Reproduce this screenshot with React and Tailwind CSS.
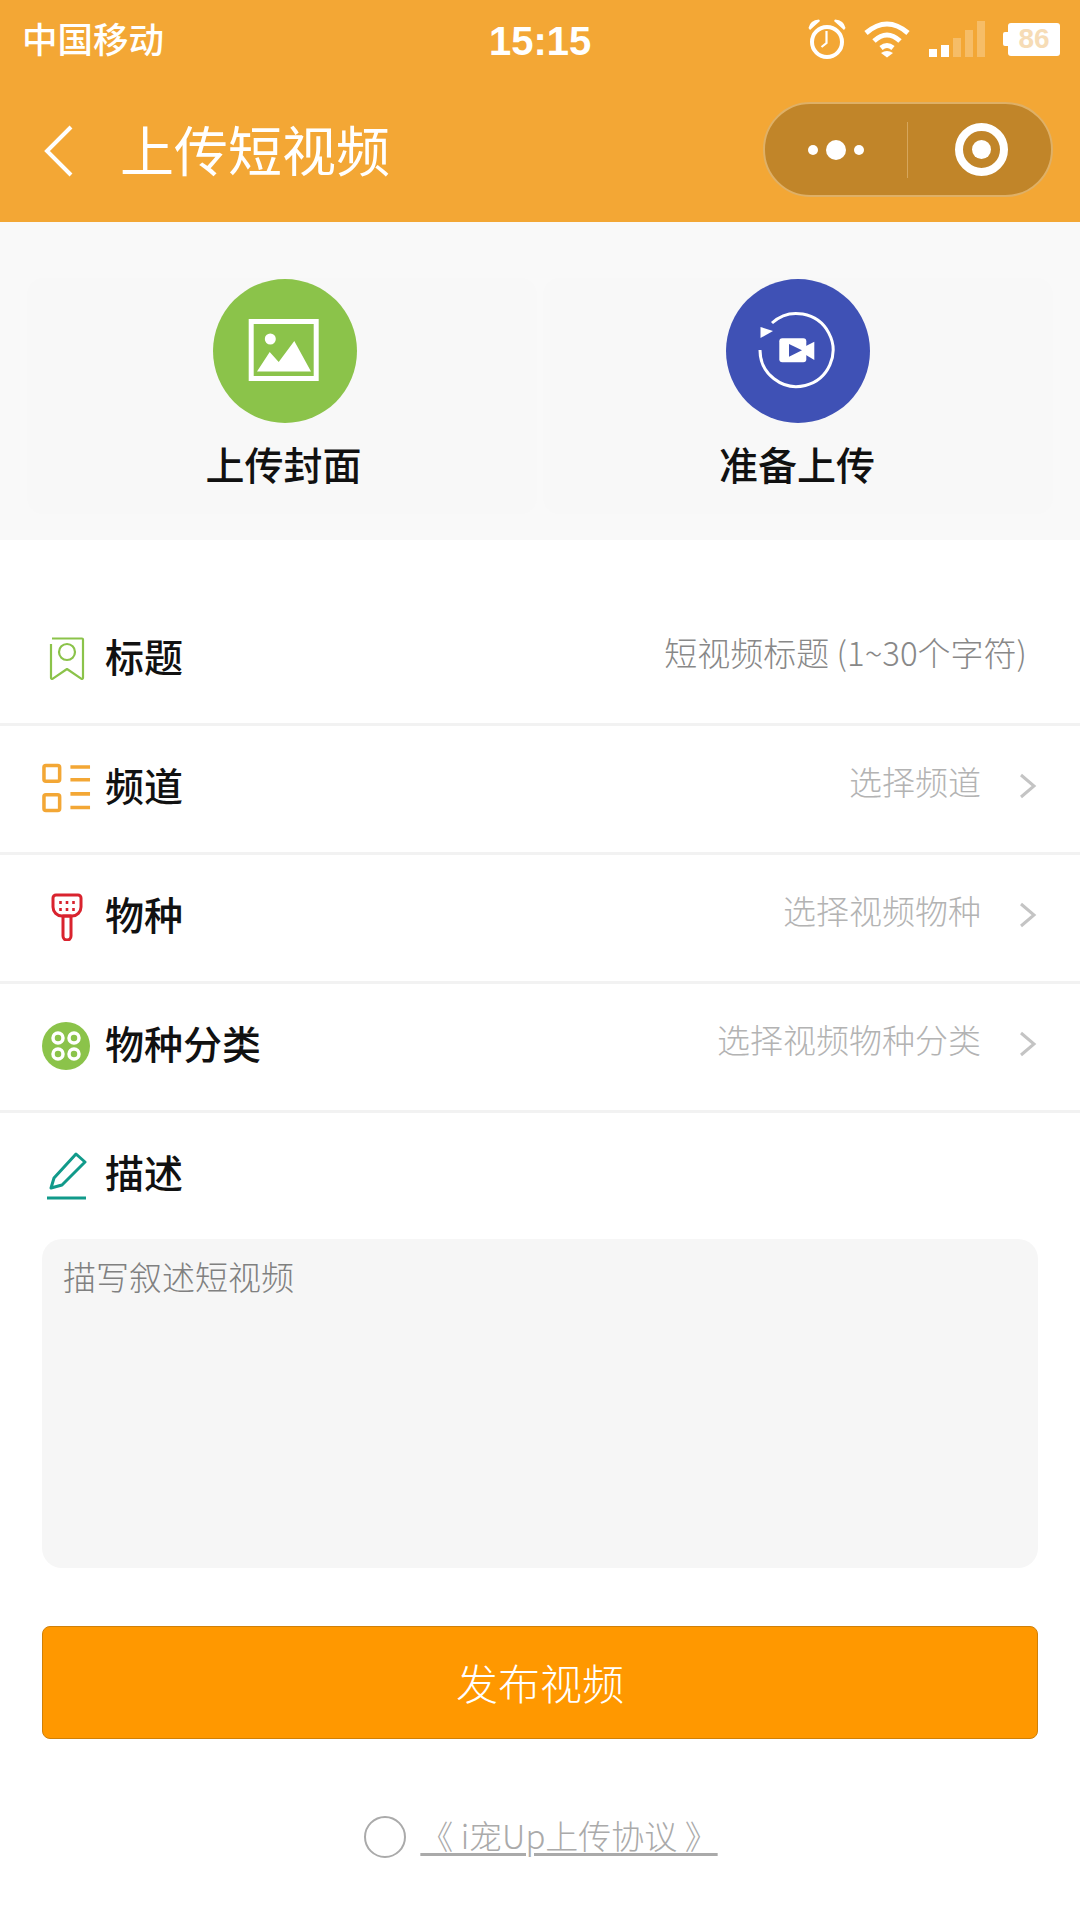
const cjk = "font-['Noto_Sans_CJK_SC','Liberation_Sans',sans-serif]";

function Alarm() {
  return (
    <svg width="40" height="40" viewBox="0 0 40 40" fill="none" stroke="#fff">
      <circle cx="19" cy="23" r="15" strokeWidth="4" />
      <path d="M18.5 12v12l-5 4" strokeWidth="2.2" />
      <path d="M0.5 9 Q2 1 11 0.5 L12 2 L2 11 Z M37.5 9 Q36 1 27 0.5 L26 2 L36 11 Z" fill="#fff" stroke="none" />
    </svg>
  );
}
function Wifi() {
  return (
    <svg width="46" height="38" viewBox="0 0 46 38" fill="none" stroke="#fff" strokeWidth="5">
      <path d="M2 13 Q23 -5 44 13" />
      <path d="M10 21 Q23 9 36 21" />
      <path d="M17 28 Q23 23 29 28" />
      <path d="M23 37.5 L17 33 Q23 29 29 33 Z" fill="#fff" stroke="none" />
    </svg>
  );
}
function Signal() {
  return (
    <svg width="58" height="36" viewBox="0 0 58 36" fill="#fff">
      <rect x="0" y="28" width="8" height="8" />
      <rect x="12" y="24" width="8" height="12" />
      <rect x="24" y="17" width="8" height="19" opacity="0.25" />
      <rect x="36" y="9" width="8" height="27" opacity="0.25" />
      <rect x="48" y="0" width="8" height="36" opacity="0.25" />
    </svg>
  );
}
function Chevron() {
  return (
    <svg width="18" height="26" viewBox="0 0 18 26" fill="none" stroke="#c4c4c4" strokeWidth="3">
      <path d="M2 2l13 11L2 24" />
    </svg>
  );
}
function BookmarkIcon() {
  return (
    <svg width="36" height="44" viewBox="0 0 36 44" fill="none" stroke="#8bc34a" strokeWidth="2.2" strokeLinejoin="round">
      <path d="M3 1.5h30a1 1 0 0 1 1 1V41a1 1 0 0 1-1.5 .8L18 32 3.5 41.8A1 1 0 0 1 2 41V7" />
      <circle cx="18" cy="15" r="8" />
    </svg>
  );
}
function ListIcon() {
  return (
    <svg width="50" height="50" viewBox="0 0 50 50" fill="none" stroke="#f3a735" strokeWidth="3.6">
      <rect x="2" y="2" width="16" height="16" rx="2" />
      <rect x="2" y="32" width="16" height="16" rx="2" />
      <path d="M29 3.5h20M29 16.5h20M29 31h20M29 45h20" />
    </svg>
  );
}
function SpatulaIcon() {
  return (
    <svg width="32" height="48" viewBox="0 0 32 48" fill="none" stroke="#d9232e" strokeWidth="3" strokeLinejoin="round">
      <path d="M5 2h22a3 3 0 0 1 3 3v9a9 9 0 0 1-9 9H11a9 9 0 0 1-9-9V5a3 3 0 0 1 3-3z" />
      <path d="M12 23h8v20a4 4 0 0 1-8 0z" />
      <path d="M9.500 8v3M16 8v3M22.500 8v3M9.500 15v3M16 15v3M22.500 15v3" strokeWidth="2.6" />
    </svg>
  );
}
function DotsIcon() {
  return (
    <svg className="-ml-[2px]" width="48" height="48" viewBox="0 0 48 48">
      <circle cx="24" cy="24" r="24" fill="#8bc34a" />
      <g fill="none" stroke="#fff" strokeWidth="3.5">
        <circle cx="16" cy="16" r="5" />
        <circle cx="32" cy="16" r="5" />
        <circle cx="16" cy="32" r="5" />
        <circle cx="32" cy="32" r="5" />
      </g>
    </svg>
  );
}
function PenIcon() {
  return (
    <svg width="40" height="48" viewBox="0 0 40 48" fill="none" stroke="#119a8a">
      <path d="M4 36 L7 26 L29 2 L38 10 L15 33 Z" strokeWidth="3" strokeLinejoin="round" />
      <path d="M0 46h39" strokeWidth="3" />
    </svg>
  );
}
function PictureIcon() {
  return (
    <svg width="144" height="144" viewBox="0 0 144 144">
      <rect x="38.200" y="42.500" width="65" height="57" fill="none" stroke="#fff" strokeWidth="5" />
      <circle cx="57.300" cy="60" r="5.500" fill="#fff" />
      <path d="M44 92.500 L56.700 73 L65.700 83 L81.300 62 L98 92.500 Z" fill="#fff" />
    </svg>
  );
}
function VideoIcon() {
  return (
    <svg width="144" height="144" viewBox="0 0 144 144">
      <path d="M34 71 A36.500 36.500 0 1 0 46 44" fill="none" stroke="#fff" strokeWidth="3" />
      <path d="M34.500 48 L34.500 59 L47 52 Z" fill="#fff" />
      <rect x="53.300" y="59.300" width="27" height="24" rx="3" fill="#fff" />
      <path d="M80 67 L88.300 62.700 V81 L80 76 Z" fill="#fff" />
      <path d="M63 65 L63 77.700 L76 71.300 Z" fill="#3f51b5" />
    </svg>
  );
}

function Row({ icon, label, value, valueClass, chevron }) {
  return (
    <div className="flex h-[129px] items-center border-b-[3px] border-[#f2f2f2] pb-[10px] pl-[42px] pr-[43px]">
      <div className="mt-[8px] flex w-[63px] shrink-0 items-center justify-center pr-[14px]">{icon}</div>
      <span className="text-[39px] font-medium leading-none text-[#111]">{label}</span>
      <span className={`ml-auto text-[33px] font-light leading-none ${valueClass}`}>{value}</span>
      {chevron && (
        <div className="ml-[38px] mt-[4px] flex">
          <Chevron />
        </div>
      )}
    </div>
  );
}

function Tile({ circle, icon, label, labelClass }) {
  return (
    <div className="flex h-[236px] flex-1 flex-col items-center rounded-[16px] bg-[#f8f8f8]">
      <div className={`mt-[1px] h-[144px] w-[144px] rounded-full ${circle}`}>{icon}</div>
      <span className={`mt-[16px] text-[39px] font-medium leading-[48px] text-[#111] ${labelClass}`}>{label}</span>
    </div>
  );
}

export default function App() {
  return (
    <div className={`${cjk} h-[1920px] w-[1080px] overflow-hidden bg-white`}>
      <header className="h-[222px] bg-[#f3a735] text-white">
        <div className="flex h-[78px] items-center pl-[22px] pr-[20px]">
          <span className="mb-[2px] w-[467px] text-[35.500px] font-medium leading-none">中国移动</span>
          <span className="mt-[3px] font-['Liberation_Sans'] text-[40px] font-bold leading-none">15:15</span>
          <div className="ml-auto flex items-center">
            <Alarm />
            <div className="ml-[16px] flex"><Wifi /></div>
            <div className="ml-[19px] flex"><Signal /></div>
            <div className="ml-[16px] flex items-center">
              <div className="h-[14px] w-[5px] rounded-l-[2px] bg-white" />
              <div className="flex h-[33px] w-[52px] items-center justify-center rounded-[3px] bg-white font-['Liberation_Sans'] text-[28px] font-bold leading-none text-[#f6dcb6]">86</div>
            </div>
          </div>
        </div>
        <div className="flex h-[144px] items-start pl-[43px] pr-[27px]">
          <svg className="mt-[47px]" width="30" height="52" viewBox="0 0 30 52" fill="none" stroke="#fff" strokeWidth="4">
            <path d="M28 2 L4 26 L28 50" />
          </svg>
          <span className="ml-[47px] mt-[44px] text-[54px] font-normal leading-none">上传短视频</span>
          <div className="ml-auto mt-[24px] flex h-[95px] w-[290px] items-center rounded-full border-2 border-[#dfb066] bg-[#c18529]">
            <div className="flex w-[142px] items-center justify-center gap-[8px]">
              <span className="h-[10px] w-[10px] rounded-full bg-white" />
              <span className="h-[20px] w-[20px] rounded-full bg-white" />
              <span className="h-[10px] w-[10px] rounded-full bg-white" />
            </div>
            <div className="h-[56px] w-px bg-[#d6a65c]" />
            <div className="flex flex-1 items-center justify-center pl-[4px]">
              <div className="flex h-[53px] w-[53px] items-center justify-center rounded-full border-[8px] border-white">
                <div className="h-[19px] w-[19px] rounded-full bg-white" />
              </div>
            </div>
          </div>
        </div>
      </header>

      <section className="flex h-[318px] gap-[6px] bg-[#f9f9f9] px-[27px] pt-[56px]">
        <Tile circle="ml-[6px] bg-[#8bc34a]" icon={<PictureIcon />} label="上传封面" labelClass="ml-[3px]" />
        <Tile circle="bg-[#3f51b5]" icon={<VideoIcon />} label="准备上传" labelClass="-ml-[2px]" />
      </section>

      <div className="mt-[57px]">
        <Row icon={<BookmarkIcon />} label="标题" value="短视频标题 (1~30个字符)" valueClass="mb-[5px] mr-[10px] text-[#888]" />
        <Row icon={<ListIcon />} label="频道" value="选择频道" valueClass="mb-[5px] text-[#b3b3b3]" chevron />
        <Row icon={<SpatulaIcon />} label="物种" value="选择视频物种" valueClass="mb-[5px] text-[#b3b3b3]" chevron />
        <Row icon={<DotsIcon />} label="物种分类" value="选择视频物种分类" valueClass="mb-[5px] text-[#b3b3b3]" chevron />
      </div>

      <div className="px-[42px]">
        <div className="flex h-[126px] items-center">
          <div className="flex w-[63px] shrink-0 items-center justify-center pr-[14px]"><PenIcon /></div>
          <span className="mb-[9px] text-[39px] font-medium leading-none text-[#111]">描述</span>
        </div>
        <div className="h-[329px] rounded-[20px] bg-[#f6f6f6] px-[21px] pt-[18px] text-[33px] font-light leading-[38px] text-[#808080]">
          描写叙述短视频
        </div>
        <div className="mt-[58px] flex h-[113px] items-center justify-center rounded-[8px] border border-[#d08008] bg-[#ff9800] pb-[3px] text-[42px] font-light text-white">
          发布视频
        </div>
        <div className="mt-[75px] flex items-center justify-center">
          <span className="ml-[2px] h-[42px] w-[42px] rounded-full border-2 border-[#aaa]" />
          <span className="mb-[4px] ml-[14px] text-[33px] font-light leading-[42px] text-[#aaa] underline decoration-[3px] underline-offset-[4px]">
            《 i宠Up上传协议 》
          </span>
        </div>
      </div>
    </div>
  );
}
